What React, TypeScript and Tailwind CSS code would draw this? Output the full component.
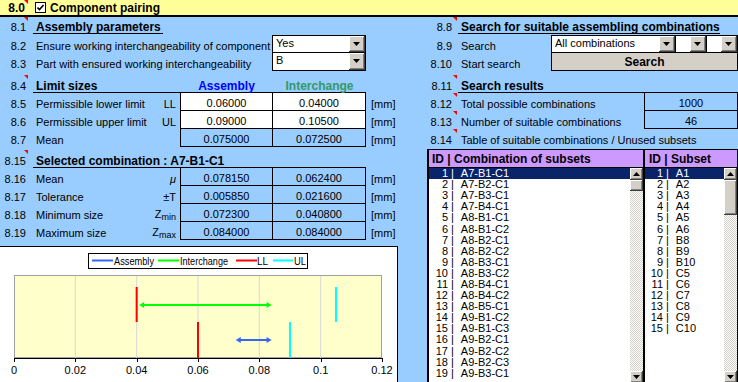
import React from 'react';

/**
 * Component pairing sheet.
 * Excel-like form: assembly parameters, limit sizes, search of combinations and a chart.
 */

const combos = [
  'A7-B1-C1', 'A7-B2-C1', 'A7-B3-C1', 'A7-B4-C1', 'A8-B1-C1', 'A8-B1-C2', 'A8-B2-C1',
  'A8-B2-C2', 'A8-B3-C1', 'A8-B3-C2', 'A8-B4-C1', 'A8-B4-C2', 'A8-B5-C1', 'A9-B1-C2',
  'A9-B1-C3', 'A9-B2-C1', 'A9-B2-C2', 'A9-B2-C3', 'A9-B3-C1',
];
const subsets = ['A1', 'A2', 'A3', 'A4', 'A5', 'A6', 'B8', 'B9', 'B10', 'C5', 'C6', 'C7', 'C8', 'C9', 'C10'];

function Mark({ pos = 'right-0' }: { pos?: string }) {
  return <span className={`absolute top-0 h-0 w-0 border-l-[4px] border-t-[4px] border-l-transparent border-t-[#ff0000] ${pos}`} />;
}

function LNum({ n, mark }: { n: string; mark?: boolean }) {
  return (
    <div className="relative flex w-[33px] shrink-0 items-end justify-end pr-[7px] leading-[13px]">
      {n}
      {mark && <Mark pos="right-[5px]" />}
    </div>
  );
}

function RNum({ n, mark }: { n: string; mark?: boolean }) {
  return (
    <div className="relative flex w-[58px] shrink-0 items-end justify-end pr-[6px] leading-[13px]">
      {n}
      {mark && <Mark pos="right-[1px]" />}
    </div>
  );
}

function Arrow({ up }: { up?: boolean }) {
  return (
    <svg width="7" height="4" viewBox="0 0 7 4">
      <polygon points={up ? '3.5,0 7,4 0,4' : '0,0 7,0 3.5,4'} fill="#000" />
    </svg>
  );
}

function DropBtn() {
  return (
    <div className="flex h-full w-[16px] shrink-0 items-center justify-center border-r border-b border-[#404040] bg-[#d4d0c8] shadow-[inset_1px_1px_#ffffff,inset_-1px_-1px_#808080]">
      <Arrow />
    </div>
  );
}

function Cell({ children, first, white }: { children: React.ReactNode; first?: boolean; white?: boolean }) {
  return (
    <div
      className={`flex w-[93px] items-end justify-center border-r border-b border-black leading-[13px] ${
        first ? 'border-l' : ''
      } ${white ? 'bg-white' : ''}`}
    >
      {children}
    </div>
  );
}

function ValueRow({
  n,
  label,
  sym,
  a,
  b,
  white,
}: {
  n: string;
  label: string;
  sym: React.ReactNode;
  a: string;
  b: string;
  white?: boolean;
}) {
  return (
    <div className="flex h-[18px]">
      <LNum n={n} />
      <div className="flex w-[147px] items-end justify-between pl-[3px] pr-[4px] leading-[13px]">
        <span>{label}</span>
        <span>{sym}</span>
      </div>
      <Cell first white={white}>
        {a}
      </Cell>
      <Cell white={white}>{b}</Cell>
      <span className="self-end pl-[5px] leading-[13px]">[mm]</span>
    </div>
  );
}

function Z({ sub }: { sub: string }) {
  return (
    <span>
      Z<span className="relative top-[2px] text-[9px]">{sub}</span>
    </span>
  );
}

function Chart() {
  const x = (v: number) => 14 + (v / 0.12) * 368;
  const ticks = [0, 0.02, 0.04, 0.06, 0.08, 0.1, 0.12];
  const font = 'Liberation Sans, Arial, sans-serif';
  const arrow = (x1: number, x2: number, y: number, c: string) => (
    <g>
      <line x1={x1 + 3} y1={y} x2={x2 - 3} y2={y} stroke={c} strokeWidth="2" />
      <polygon points={`${x1},${y} ${x1 + 5},${y - 3} ${x1 + 5},${y + 3}`} fill={c} />
      <polygon points={`${x2},${y} ${x2 - 5},${y - 3} ${x2 - 5},${y + 3}`} fill={c} />
    </g>
  );
  return (
    <div className="mt-[6px] h-[137px] w-[398px] border-t border-r border-black bg-white">
      <svg width="397" height="136" viewBox="0 0 397 136">
        {/* legend */}
        <rect x="88.5" y="6.5" width="219" height="15" fill="#fff" stroke="#000" />
        <line x1="92" y1="13.5" x2="113" y2="13.5" stroke="#3366ff" strokeWidth="2" />
        <line x1="158" y1="13.5" x2="179" y2="13.5" stroke="#00ff00" strokeWidth="2" />
        <line x1="236" y1="13.5" x2="257" y2="13.5" stroke="#ff0000" strokeWidth="2" />
        <line x1="273" y1="13.5" x2="293" y2="13.5" stroke="#00ffff" strokeWidth="2" />
        <g fontFamily={font} fontSize="11" fill="#000">
          <text x="114" y="17.5" textLength="40" lengthAdjust="spacingAndGlyphs">
            Assembly
          </text>
          <text x="180" y="17.5" textLength="48" lengthAdjust="spacingAndGlyphs">
            Interchange
          </text>
          <text x="257" y="17.5" textLength="11" lengthAdjust="spacingAndGlyphs">
            LL
          </text>
          <text x="294" y="17.5" textLength="12" lengthAdjust="spacingAndGlyphs">
            UL
          </text>
        </g>
        {/* plot area */}
        <rect x="14.5" y="28.5" width="367" height="82" fill="#ffffcc" stroke="#a0a0a0" />
        {ticks.slice(1, -1).map((t) => (
          <line key={t} x1={x(t)} y1="29" x2={x(t)} y2="111" stroke="#d8d8d8" />
        ))}
        <line x1="14" y1="111.5" x2="382" y2="111.5" stroke="#000" />
        {ticks.map((t) => (
          <g key={t}>
            <line x1={Math.round(x(t)) + 0.5} y1="111" x2={Math.round(x(t)) + 0.5} y2="115" stroke="#000" />
            <text x={x(t)} y="127" textAnchor="middle" fontFamily={font} fontSize="11">
              {t}
            </text>
          </g>
        ))}
        {/* limits and ranges */}
        <line x1={x(0.04)} y1="40" x2={x(0.04)} y2="75" stroke="#ff0000" strokeWidth="2" />
        <line x1={x(0.105)} y1="40" x2={x(0.105)} y2="75" stroke="#00ffff" strokeWidth="2" />
        {arrow(x(0.0408), x(0.084), 58, '#00ff00')}
        <line x1={x(0.06)} y1="75" x2={x(0.06)} y2="111" stroke="#ff0000" strokeWidth="2" />
        <line x1={x(0.09)} y1="75" x2={x(0.09)} y2="111" stroke="#00ffff" strokeWidth="2" />
        {arrow(x(0.0723), x(0.084), 93, '#3366ff')}
      </svg>
    </div>
  );
}

function Scrollbar({ thumb }: { thumb: string }) {
  const btn =
    'flex h-[12px] w-[13px] shrink-0 items-center justify-center border-r border-b border-[#404040] bg-[#d4d0c8] shadow-[inset_1px_1px_#ffffff,inset_-1px_-1px_#808080]';
  return (
    <div className="flex w-[13px] shrink-0 flex-col">
      <div className={btn}>
        <Arrow up />
      </div>
      <div className={`w-[13px] shrink-0 border-r border-b border-[#404040] bg-[#d4d0c8] shadow-[inset_1px_1px_#ffffff,inset_-1px_-1px_#808080] ${thumb}`} />
      <div className="flex-1 bg-[image:repeating-conic-gradient(#d4d0c8_0_25%,#ffffff_0_50%)] bg-[length:2px_2px]" />
      <div className={btn}>
        <Arrow />
      </div>
    </div>
  );
}

function ListRow({ id, text, sel, numW }: { id: number; text: string; sel?: boolean; numW: string }) {
  return (
    <div className={`flex h-[11.1px] items-center leading-[11px] ${sel ? 'bg-[#0a246a] text-white' : ''}`}>
      <span className={`text-right ${numW}`}>{id}</span>
      <span className="ml-[3px]">|</span>
      <span className="ml-[7px]">{text}</span>
    </div>
  );
}

export default function App() {
  return (
    <div className="h-[382px] w-[738px] overflow-hidden bg-[#99ccff] font-['Liberation_Sans',Arial,sans-serif] text-[11px] text-black">
      {/* 8.0 title bar */}
      <div className="flex h-[17px] items-center border-b-2 border-black bg-[#ffff99] text-[12px] font-bold">
        <div className="relative flex h-full w-[28px] items-center justify-end pr-[3px]">
          8.0
          <Mark />
        </div>
        <div className="ml-[7px] flex h-[11px] w-[11px] items-center justify-center border border-black bg-white">
          <svg width="7" height="7" viewBox="0 0 7 7">
            <path d="M0.5 3.5 L2.5 5.5 L6.5 1" stroke="#000" strokeWidth="1.6" fill="none" />
          </svg>
        </div>
        <span className="ml-[4px]">Component pairing</span>
      </div>

      <div className="flex">
        {/* left column */}
        <div className="w-[400px] shrink-0">
          <div className="flex h-[18px] pb-[1px]">
            <LNum n="8.1" mark />
            <div className="flex items-end">
              <span className="border-b border-black pl-[3px] pr-[2px] text-[12px] font-bold leading-[11px]">Assembly parameters</span>
            </div>
          </div>
          <div className="flex h-[18px]">
            <LNum n="8.2" />
            <span className="w-[239px] self-end pl-[3px] leading-[13px]">Ensure working interchangeability of component</span>
            <div className="flex w-[94px] border border-black bg-white">
              <span className="flex-1 pl-[3px] leading-[15px]">Yes</span>
              <DropBtn />
            </div>
          </div>
          <div className="flex h-[18px]">
            <LNum n="8.3" />
            <span className="w-[239px] self-end pl-[3px] leading-[13px]">Part with ensured working interchangeability</span>
            <div className="flex w-[94px] border-x border-b border-black bg-white">
              <span className="flex-1 pl-[3px] leading-[15px]">B</span>
              <DropBtn />
            </div>
          </div>

          <div className="mt-[4px] flex h-[18px]">
            <LNum n="8.4" mark />
            <div className="flex w-[333px] items-end border-b border-black text-[12px] font-bold leading-[12px]">
              <span className="w-[147px] pl-[3px]">Limit sizes</span>
              <span className="w-[93px] text-center text-[#0000ff]">Assembly</span>
              <span className="w-[93px] text-center text-[#339966]">Interchange</span>
            </div>
          </div>
          <ValueRow n="8.5" label="Permissible lower limit" sym="LL" a="0.06000" b="0.04000" white />
          <ValueRow n="8.6" label="Permissible upper limit" sym="UL" a="0.09000" b="0.10500" white />
          <ValueRow n="8.7" label="Mean" sym="" a="0.075000" b="0.072500" />

          <div className="mt-[3px] flex h-[18px]">
            <LNum n="8.15" mark />
            <div className="flex w-[333px] items-end border-b border-black text-[12px] font-bold leading-[12px]">
              <span className="pl-[3px]">Selected combination : A7-B1-C1</span>
            </div>
          </div>
          <ValueRow n="8.16" label="Mean" sym={<i>μ</i>} a="0.078150" b="0.062400" />
          <ValueRow n="8.17" label="Tolerance" sym="±T" a="0.005850" b="0.021600" />
          <ValueRow n="8.18" label="Minimum size" sym={<Z sub="min" />} a="0.072300" b="0.040800" />
          <ValueRow n="8.19" label="Maximum size" sym={<Z sub="max" />} a="0.084000" b="0.084000" />

          <Chart />
        </div>

        {/* right column */}
        <div className="w-[338px] shrink-0">
          <div className="flex h-[18px] pb-[1px]">
            <RNum n="8.8" mark />
            <div className="flex items-end">
              <span className="border-b border-black pl-[3px] text-[12px] font-bold leading-[11px]">
                Search for suitable assembling combinations
              </span>
            </div>
          </div>
          <div className="flex h-[18px]">
            <RNum n="8.9" />
            <span className="w-[93px] self-end pl-[3px] leading-[13px]">Search</span>
            <div className="flex w-[125px] border border-black bg-white">
              <span className="flex-1 pl-[3px] leading-[15px]">All combinations</span>
              <DropBtn />
            </div>
            <div className="flex w-[31px] justify-end border-y border-r border-black bg-white">
              <DropBtn />
            </div>
            <div className="flex w-[31px] justify-end border-y border-r border-black bg-white">
              <DropBtn />
            </div>
          </div>
          <div className="flex h-[18px]">
            <RNum n="8.10" />
            <span className="w-[93px] self-end pl-[3px] leading-[13px]">Start search</span>
            <div className="flex w-[187px] items-center justify-center border-x border-b border-black bg-[#d4d0c8] text-[12px] font-bold">
              Search
            </div>
          </div>

          <div className="mt-[4px] flex h-[18px]">
            <RNum n="8.11" mark />
            <div className="flex flex-1 items-end border-b border-black text-[12px] font-bold leading-[12px]">
              <span className="pl-[3px]">Search results</span>
            </div>
          </div>
          <div className="flex h-[18px]">
            <RNum n="8.12" mark />
            <span className="flex-1 self-end pl-[3px] leading-[13px]">Total possible combinations</span>
            <div className="flex w-[94px] items-end justify-center border-x border-b border-black leading-[13px]">1000</div>
          </div>
          <div className="flex h-[18px]">
            <RNum n="8.13" mark />
            <span className="flex-1 self-end pl-[3px] leading-[13px]">Number of suitable combinations</span>
            <div className="flex w-[94px] items-end justify-center border-x border-b border-black leading-[13px]">46</div>
          </div>
          <div className="flex h-[18px]">
            <RNum n="8.14" mark />
            <span className="self-end pl-[3px] leading-[13px]">Table of suitable combinations / Unused subsets</span>
          </div>

          {/* lists */}
          <div className="ml-[27px] mt-[2px] flex h-[234px]">
            <div className="flex w-[218px] shrink-0 flex-col border-x-2 border-black">
              <div className="flex h-[19px] shrink-0 items-center border-y border-black bg-[#cc99ff] pl-[3px] text-[12px] font-bold">
                ID | Combination of subsets
              </div>
              <div className="flex flex-1 bg-white">
                <div className="flex-1">
                  {combos.map((c, i) => (
                    <ListRow key={c} id={i + 1} text={c} sel={i === 0} numW="w-[19px]" />
                  ))}
                </div>
                <Scrollbar thumb="h-[11px]" />
              </div>
            </div>
            <div className="flex flex-1 flex-col border-r border-black">
              <div className="flex h-[19px] shrink-0 items-center border-y border-black bg-[#cc99ff] pl-[4px] text-[12px] font-bold">
                ID | Subset
              </div>
              <div className="flex flex-1 bg-white">
                <div className="flex-1">
                  {subsets.map((s, i) => (
                    <ListRow key={s} id={i + 1} text={s} sel={i === 0} numW="w-[18px]" />
                  ))}
                </div>
                <Scrollbar thumb="h-[35px]" />
              </div>
            </div>
          </div>
        </div>
      </div>
    </div>
  );
}
